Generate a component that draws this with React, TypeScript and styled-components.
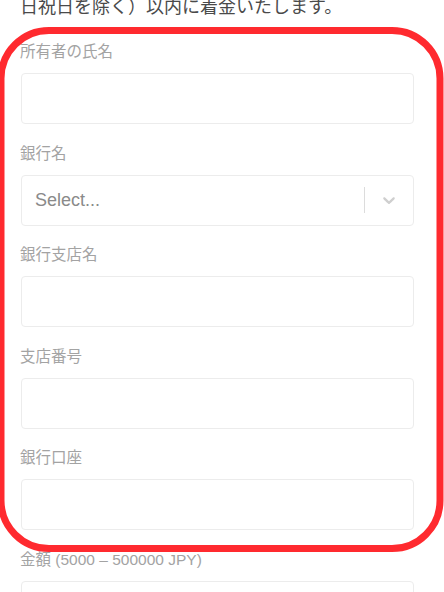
import React from "react";
import styled, { createGlobalStyle } from "styled-components";

const GlobalStyle = createGlobalStyle`
  html, body {
    margin: 0;
    padding: 0;
    background: #ffffff;
  }
  body {
    font-family: "Liberation Sans", "Noto Sans CJK JP", sans-serif;
    overflow: hidden;
  }
`;

interface Field {
  label: string;
  select?: boolean;
}

const fields: Field[] = [
  { label: "所有者の氏名" },
  { label: "銀行名", select: true },
  { label: "銀行支店名" },
  { label: "支店番号" },
  { label: "銀行口座" },
  { label: "金額 (5000 – 500000 JPY)" },
];

const App: React.FC = () => {
  return (
    <>
      <GlobalStyle />
      <Page>
        <Notice>日祝日を除く）以内に着金いたします。</Notice>
        <Form>
          {fields.map((f) => (
            <FormRow key={f.label}>
              <FormLabel>{f.label}</FormLabel>
              {f.select ? (
                <SelectBox>
                  <Placeholder>Select...</Placeholder>
                  <Indicators>
                    <Separator />
                    <Chevron viewBox="0 0 20 20" aria-hidden="true">
                      <path d="M4.516 7.548c0.436-0.446 1.043-0.481 1.576 0l3.908 3.747 3.908-3.747c0.533-0.481 1.141-0.446 1.574 0 0.436 0.445 0.408 1.197 0 1.615-0.406 0.418-4.695 4.502-4.695 4.502-0.217 0.223-0.502 0.335-0.787 0.335s-0.57-0.112-0.789-0.335c0 0-4.287-4.084-4.695-4.502s-0.436-1.17 0-1.615z" />
                    </Chevron>
                  </Indicators>
                </SelectBox>
              ) : (
                <FormInput type="text" />
              )}
            </FormRow>
          ))}
        </Form>
        <Annotation width="444" height="592" viewBox="0 0 444 592">
          <rect
            x="1"
            y="30.5"
            width="439"
            height="518"
            rx="48"
            ry="48"
            fill="none"
            stroke="#ff2a2f"
            strokeWidth="7"
          />
        </Annotation>
      </Page>
    </>
  );
};

export default App;

const Page = styled.div`
  position: relative;
  width: 444px;
  height: 592px;
  overflow: hidden;
  padding: 0 30px 0 21px;
  box-sizing: border-box;
`;

const Notice = styled.p`
  margin: -3px 0 0 -1px;
  font-size: 18px;
  line-height: 20px;
  color: #4a4a4a;
  white-space: nowrap;
`;

const Form = styled.div`
  display: flex;
  flex-direction: column;
  gap: 19.5px;
  margin-top: 25px;
`;

const FormRow = styled.div`
  display: flex;
  flex-direction: column;
`;

const FormLabel = styled.label`
  font-size: 15.5px;
  line-height: 20px;
  color: #a3a3a3;
  margin-left: -1px;
  margin-bottom: 11px;
  white-space: nowrap;
`;

const FormInput = styled.input`
  height: 51px;
  box-sizing: border-box;
  border: 1px solid #ececec;
  border-radius: 4px;
  background: #ffffff;
  padding: 0 14px;
  font-size: 16px;
  outline: none;
`;

const SelectBox = styled.div`
  height: 51px;
  box-sizing: border-box;
  border: 1px solid #ececec;
  border-radius: 4px;
  display: flex;
  align-items: center;
  justify-content: space-between;
  padding-left: 13px;
`;

const Placeholder = styled.span`
  font-size: 18px;
  color: #8a8a8a;
`;

const Indicators = styled.div`
  display: flex;
  align-items: center;
  height: 100%;
`;

const Separator = styled.span`
  width: 1px;
  height: 26px;
  background: #dcdcdc;
`;

const Chevron = styled.svg`
  width: 20px;
  height: 20px;
  fill: #cfcfcf;
  margin: 0 14px 0 14px;
`;

const Annotation = styled.svg`
  position: absolute;
  top: 0;
  left: 0;
  pointer-events: none;
`;
